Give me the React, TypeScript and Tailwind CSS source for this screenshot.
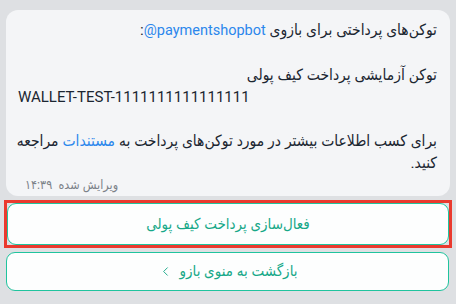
import { ChevronLeft } from 'lucide-react';

export default function App() {
  return (
    <div
      className="h-[304px] w-[456px] overflow-hidden bg-[#dee0e3] px-[6px] pt-[10px]"
      style={{ fontFamily: 'Roboto, "DejaVu Sans Condensed", "DejaVu Sans", sans-serif' }}
    >
      <div className="h-[186px] w-[444px] rounded-[12px] bg-[#f4f5f7] pl-[12px] pr-[13px] pt-[9px] text-[15.5px] leading-[22px] text-[#1b2631]">
        <p dir="rtl" className="whitespace-nowrap">
          توکن‌های پرداختی برای بازوی{' '}
          <bdi dir="ltr" className="text-[14.5px] text-[#2b87ec]">@paymentshopbot</bdi>:
        </p>
        <p dir="rtl" className="mt-[22px]">توکن آزمایشی پرداخت کیف پولی</p>
        <p dir="ltr" className="text-[15px]">WALLET-TEST-1111111111111111</p>
        <p dir="rtl" className="mt-[22px] whitespace-nowrap">
          برای کسب اطلاعات بیشتر در مورد توکن‌های پرداخت به{' '}
          <span className="text-[#2b87ec]">مستندات</span> مراجعه
          <br />
          کنید.
        </p>
        <div className="mt-[3px] pl-[7px] text-[12.5px] leading-[16px] text-[#7c8289]">
          <span dir="rtl">ویرایش شده&nbsp;&nbsp;۱۴:۳۹</span>
        </div>
      </div>

      <div className="mt-[4px] -mx-[2px] border-[3px] border-[#ea3a2e]">
        <button className="flex h-[42px] w-full items-center justify-center rounded-[9px] border-[1.5px] border-[#20c49e] bg-[#fdfefe] text-[15px] text-[#17a888]">
          <span dir="rtl">فعال‌سازی پرداخت کیف پولی</span>
        </button>
      </div>

      <button className="mt-[4px] flex h-[39px] w-[443px] items-center justify-center gap-[7px] rounded-[9px] border-[1.5px] border-[#20c49e] bg-[#fdfefe] text-[15px] text-[#17a888]">
        <ChevronLeft size={15} strokeWidth={1.5} />
        <span dir="rtl">بازگشت به منوی بازو</span>
      </button>
    </div>
  );
}
